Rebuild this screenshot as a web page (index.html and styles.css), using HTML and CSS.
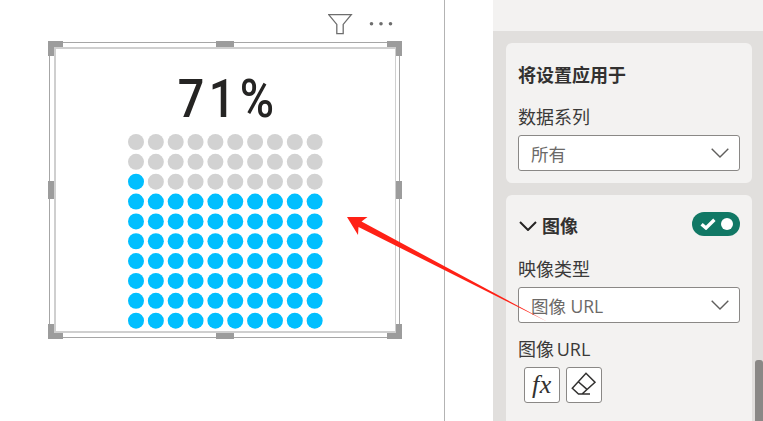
FILE: index.html
```html
<!DOCTYPE html>
<html lang="zh">
<head>
<meta charset="utf-8">
<title>格式设置</title>
<link rel="stylesheet" href="styles.css">
</head>
<body>
<div class="page">
  <main class="canvas">
    <svg class="visual-icons" width="80" height="30" viewBox="0 0 80 30">
      <path class="filter-icon" d="M0.7 4.6H23.3L15.2 14.4V23.6H8.8V14.4Z"/>
      <circle class="more-dot" cx="43.5" cy="13.7" r="1.8"/>
      <circle class="more-dot" cx="53" cy="13.7" r="1.8"/>
      <circle class="more-dot" cx="62.5" cy="13.7" r="1.8"/>
    </svg>
    <section class="visual">
      <span class="handle corner tl"></span><span class="handle corner tr"></span>
      <span class="handle corner bl"></span><span class="handle corner br"></span>
      <span class="handle mid-t"></span><span class="handle mid-b"></span>
      <span class="handle mid-l"></span><span class="handle mid-r"></span>
      <div class="visual-inner">
        <div class="percent">71%</div>
        <svg class="waffle" width="196" height="196" viewBox="0 0 196 196">
          <g class="empty">
            <circle cx="8" cy="8" r="8"/><circle cx="27.85" cy="8" r="8"/><circle cx="47.7" cy="8" r="8"/><circle cx="67.55" cy="8" r="8"/><circle cx="87.4" cy="8" r="8"/><circle cx="107.25" cy="8" r="8"/><circle cx="127.1" cy="8" r="8"/><circle cx="146.95" cy="8" r="8"/><circle cx="166.8" cy="8" r="8"/><circle cx="186.65" cy="8" r="8"/>
            <circle cx="8" cy="27.85" r="8"/><circle cx="27.85" cy="27.85" r="8"/><circle cx="47.7" cy="27.85" r="8"/><circle cx="67.55" cy="27.85" r="8"/><circle cx="87.4" cy="27.85" r="8"/><circle cx="107.25" cy="27.85" r="8"/><circle cx="127.1" cy="27.85" r="8"/><circle cx="146.95" cy="27.85" r="8"/><circle cx="166.8" cy="27.85" r="8"/><circle cx="186.65" cy="27.85" r="8"/>
            <circle cx="27.85" cy="47.7" r="8"/><circle cx="47.7" cy="47.7" r="8"/><circle cx="67.55" cy="47.7" r="8"/><circle cx="87.4" cy="47.7" r="8"/><circle cx="107.25" cy="47.7" r="8"/><circle cx="127.1" cy="47.7" r="8"/><circle cx="146.95" cy="47.7" r="8"/><circle cx="166.8" cy="47.7" r="8"/><circle cx="186.65" cy="47.7" r="8"/>
          </g>
          <g class="filled">
            <circle cx="8" cy="47.7" r="8"/>
            <circle cx="8" cy="67.55" r="8"/><circle cx="27.85" cy="67.55" r="8"/><circle cx="47.7" cy="67.55" r="8"/><circle cx="67.55" cy="67.55" r="8"/><circle cx="87.4" cy="67.55" r="8"/><circle cx="107.25" cy="67.55" r="8"/><circle cx="127.1" cy="67.55" r="8"/><circle cx="146.95" cy="67.55" r="8"/><circle cx="166.8" cy="67.55" r="8"/><circle cx="186.65" cy="67.55" r="8"/>
            <circle cx="8" cy="87.4" r="8"/><circle cx="27.85" cy="87.4" r="8"/><circle cx="47.7" cy="87.4" r="8"/><circle cx="67.55" cy="87.4" r="8"/><circle cx="87.4" cy="87.4" r="8"/><circle cx="107.25" cy="87.4" r="8"/><circle cx="127.1" cy="87.4" r="8"/><circle cx="146.95" cy="87.4" r="8"/><circle cx="166.8" cy="87.4" r="8"/><circle cx="186.65" cy="87.4" r="8"/>
            <circle cx="8" cy="107.25" r="8"/><circle cx="27.85" cy="107.25" r="8"/><circle cx="47.7" cy="107.25" r="8"/><circle cx="67.55" cy="107.25" r="8"/><circle cx="87.4" cy="107.25" r="8"/><circle cx="107.25" cy="107.25" r="8"/><circle cx="127.1" cy="107.25" r="8"/><circle cx="146.95" cy="107.25" r="8"/><circle cx="166.8" cy="107.25" r="8"/><circle cx="186.65" cy="107.25" r="8"/>
            <circle cx="8" cy="127.1" r="8"/><circle cx="27.85" cy="127.1" r="8"/><circle cx="47.7" cy="127.1" r="8"/><circle cx="67.55" cy="127.1" r="8"/><circle cx="87.4" cy="127.1" r="8"/><circle cx="107.25" cy="127.1" r="8"/><circle cx="127.1" cy="127.1" r="8"/><circle cx="146.95" cy="127.1" r="8"/><circle cx="166.8" cy="127.1" r="8"/><circle cx="186.65" cy="127.1" r="8"/>
            <circle cx="8" cy="146.95" r="8"/><circle cx="27.85" cy="146.95" r="8"/><circle cx="47.7" cy="146.95" r="8"/><circle cx="67.55" cy="146.95" r="8"/><circle cx="87.4" cy="146.95" r="8"/><circle cx="107.25" cy="146.95" r="8"/><circle cx="127.1" cy="146.95" r="8"/><circle cx="146.95" cy="146.95" r="8"/><circle cx="166.8" cy="146.95" r="8"/><circle cx="186.65" cy="146.95" r="8"/>
            <circle cx="8" cy="166.8" r="8"/><circle cx="27.85" cy="166.8" r="8"/><circle cx="47.7" cy="166.8" r="8"/><circle cx="67.55" cy="166.8" r="8"/><circle cx="87.4" cy="166.8" r="8"/><circle cx="107.25" cy="166.8" r="8"/><circle cx="127.1" cy="166.8" r="8"/><circle cx="146.95" cy="166.8" r="8"/><circle cx="166.8" cy="166.8" r="8"/><circle cx="186.65" cy="166.8" r="8"/>
            <circle cx="8" cy="186.65" r="8"/><circle cx="27.85" cy="186.65" r="8"/><circle cx="47.7" cy="186.65" r="8"/><circle cx="67.55" cy="186.65" r="8"/><circle cx="87.4" cy="186.65" r="8"/><circle cx="107.25" cy="186.65" r="8"/><circle cx="127.1" cy="186.65" r="8"/><circle cx="146.95" cy="186.65" r="8"/><circle cx="166.8" cy="186.65" r="8"/><circle cx="186.65" cy="186.65" r="8"/>
          </g>
        </svg>
      </div>
    </section>
  </main>
  <div class="gutter"></div>
  <aside class="panel">
    <div class="panel-top"></div>
    <div class="panel-body">
      <section class="card card-apply">
        <h2 class="card-title">将设置应用于</h2>
        <div class="field-label">数据系列</div>
        <div class="select">
          <span>所有</span>
          <svg class="chevron" width="18" height="10" viewBox="0 0 18 10"><path d="M0.7 0.7L9 9L17.3 0.7"/></svg>
        </div>
      </section>
      <section class="card card-image">
        <header class="card-head">
          <svg class="head-chevron" width="18" height="10" viewBox="0 0 18 10"><path d="M1 1L9 9L17 1"/></svg>
          <h2 class="card-title head-title">图像</h2>
          <div class="toggle">
            <svg class="toggle-check" width="16" height="12" viewBox="0 0 16 12"><path d="M1.6 6.2L6 10L14.4 1.8"/></svg>
            <span class="toggle-knob"></span>
          </div>
        </header>
        <div class="field-label">映像类型</div>
        <div class="select">
          <span>图像 URL</span>
          <svg class="chevron" width="18" height="10" viewBox="0 0 18 10"><path d="M0.7 0.7L9 9L17.3 0.7"/></svg>
        </div>
        <div class="field-label label-url">图像 URL</div>
        <div class="tool-row">
          <button class="tool-btn fx"><i>fx</i></button>
          <button class="tool-btn">
            <svg width="34" height="34" viewBox="0 0 34 34"><path d="M5.3 20.3L19 5.3L28 14.3L15 26H11.5ZM11.3 13.7L20 21.4M11.5 26H23"/></svg>
          </button>
        </div>
      </section>
    </div>
    <div class="scroll-thumb"></div>
  </aside>
  <svg class="arrow" width="763" height="421" viewBox="0 0 763 421"><polygon points="347,217 367.5,217 361.5,221.5 547,321.5 358.5,227 358,235"/></svg>
</div>
</body>
</html>
```
FILE: styles.css
```css
* { box-sizing: border-box; }
html, body { margin: 0; height: 100%; background: #fff; overflow: hidden; }
body { font-family: "Open Sans", "Noto Sans CJK SC", sans-serif; color: #323130; }
.page { position: relative; display: flex; width: 763px; height: 421px; }

.canvas { position: relative; width: 445px; height: 421px; border-right: 1px solid #b3b3b3; flex: none; }
.gutter { width: 48px; flex: none; }

.visual-icons { position: absolute; left: 327.5px; top: 10px; }
.filter-icon { fill: none; stroke: #6e6e6e; stroke-width: 1.3; }
.more-dot { fill: #6e6e6e; }

.visual { position: absolute; left: 49px; top: 42px; width: 351px; height: 296px; border: 1px solid #a6a6a6; padding: 4px 3px 4px 4px; }
.visual-inner { height: 100%; border: 1px solid #cfcfcf; border-bottom-width: 2px; border-left-width: 2px; border-top-width: 2px; display: flex; flex-direction: column; align-items: center; }
.percent { font-family: Roboto, sans-serif; font-size: 53px; font-weight: 500; line-height: 62px; margin-top: 19px; margin-left: 6px; height: 64px; color: #252423; letter-spacing: 5px; transform: scaleX(0.88); }
.waffle { flex: none; margin-top: 2px; margin-left: 1px; }
.empty { fill: #d2d2d2; }
.filled { fill: #00bfff; }

.handle { position: absolute; background: #9c9c9c; }
.corner { width: 15px; height: 15px; background: none; border: 0 solid #9c9c9c; }
.tl { left: -2px; top: -2px; border-width: 6px 0 0 6px; }
.tr { right: -3px; top: -2px; border-width: 6px 6px 0 0; }
.bl { left: -2px; bottom: -2px; border-width: 0 0 6px 6px; }
.br { right: -3px; bottom: -2px; border-width: 0 6px 6px 0; }
.mid-t, .mid-b { left: 166px; width: 18px; height: 6px; }
.mid-t { top: -2px; }
.mid-b { bottom: -2px; }
.mid-l, .mid-r { top: 138px; width: 6px; height: 18px; }
.mid-l { left: -2px; }
.mid-r { right: -3px; }

.panel { position: relative; width: 270px; height: 421px; flex: none; background: #e1dfdd; overflow: hidden; }
.panel-top { height: 31px; background: #f3f2f1; }
.panel-body { padding: 12px 11px 0 13px; display: flex; flex-direction: column; gap: 12px; }
.card { background: #f3f2f1; border-radius: 6px; padding: 0 12px; }
.card-apply { height: 140px; padding-top: 20px; }
.card-image { height: 240px; padding-top: 17px; border-radius: 6px 6px 0 0; }
.card-title { margin: 0; font-size: 18px; line-height: 24px; font-weight: 700; color: #323130; }
.head-title { margin-top: 4px; }
.field-label { font-size: 18px; line-height: 24px; color: #3b3a39; }
.card-apply .field-label { margin-top: 18px; margin-bottom: 6px; }
.card-image .field-label { margin-top: 21px; margin-bottom: 6px; }
.card-image .label-url { margin-top: 14px; margin-bottom: 6px; word-spacing: -2px; }

.select { display: flex; align-items: center; justify-content: space-between; height: 36px; background: #fff; border: 1px solid #8a8886; border-radius: 3px; padding: 0 10px 0 12px; font-size: 17.5px; color: #6b6967; }
.chevron path { fill: none; stroke: #605e5c; stroke-width: 1.4; }

.card-head { display: flex; align-items: center; height: 24px; }
.head-chevron { margin-left: 1px; margin-right: 5px; margin-top: 4px; }
.head-chevron path { fill: none; stroke: #252423; stroke-width: 2; }
.toggle { margin-left: auto; width: 48px; height: 24px; border-radius: 12px; background: #117865; display: flex; align-items: center; padding: 0 7.5px 0 8px; justify-content: space-between; }
.toggle-check path { fill: none; stroke: #fff; stroke-width: 3.4; }
.toggle-knob { width: 12px; height: 12px; border-radius: 50%; background: #fff; }

.tool-row { display: flex; gap: 6px; padding-left: 6px; }
.tool-btn { width: 36px; height: 36px; background: #fff; border: 1px solid #8a8886; border-radius: 3px; padding: 0; display: flex; align-items: center; justify-content: center; }
.tool-btn svg path { fill: none; stroke: #323130; stroke-width: 1.5; }
.fx { font-family: "Liberation Serif", serif; font-size: 26px; color: #323130; letter-spacing: 0.5px; }

.scroll-thumb { position: absolute; right: 0; top: 360px; width: 8px; height: 61px; background: #8a8886; border-radius: 3px 3px 0 0; }

.arrow { position: absolute; left: 0; top: 0; pointer-events: none; }
.arrow polygon { fill: #ff2116; }
```
